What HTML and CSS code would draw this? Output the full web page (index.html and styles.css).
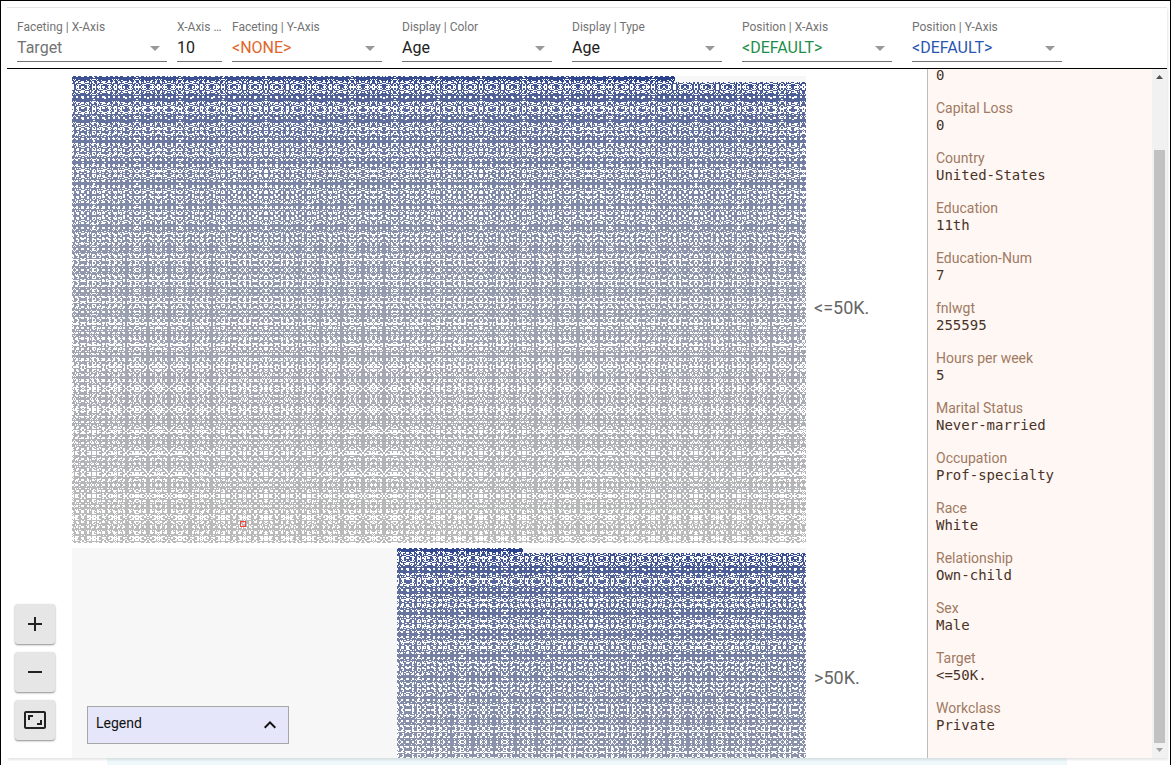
FILE: index.html
```html
<!DOCTYPE html>
<html lang="en">
<head>
<meta charset="utf-8">
<title>Facets Dive</title>
<link rel="stylesheet" href="styles.css">
</head>
<body>
<div class="frame">
  <main class="dive">
    <header class="controls">
      <div class="group">
        <div class="field muted"><label for="fx">Faceting | X-Axis</label><select id="fx"><option>Target</option></select></div>
        <div class="field count"><label for="fn">X-Axis Buckets</label><input id="fn" type="text" value="10"></div>
        <div class="field orange"><label for="fy">Faceting | Y-Axis</label><select id="fy"><option>&lt;NONE&gt;</option></select></div>
      </div>
      <div class="field"><label for="dc">Display | Color</label><select id="dc"><option>Age</option></select></div>
      <div class="field"><label for="dt">Display | Type</label><select id="dt"><option>Age</option></select></div>
      <div class="field green"><label for="px">Position | X-Axis</label><select id="px"><option>&lt;DEFAULT&gt;</option></select></div>
      <div class="field blue"><label for="py">Position | Y-Axis</label><select id="py"><option>&lt;DEFAULT&gt;</option></select></div>
    </header>
    <div class="content">
      <section class="stage">
        <div class="facets">
          <div class="facet">
            <canvas class="dots" data-count="12435" data-cols="140" data-end="1"></canvas>
            <span class="marker"></span>
          </div>
          <div class="facet-label">&lt;=50K.</div>
          <div class="facet">
            <canvas class="dots" data-count="3846" data-cols="78" data-end="0.75"></canvas>
          </div>
          <div class="facet-label">&gt;50K.</div>
        </div>
        <div class="zoom">
          <button aria-label="Zoom in"><svg viewBox="0 0 24 24"><path d="M19 13h-6v6h-2v-6H5v-2h6V5h2v6h6z"/></svg></button>
          <button aria-label="Zoom out"><svg viewBox="0 0 24 24"><path d="M19 13H5v-2h14z"/></svg></button>
          <button aria-label="Fit to window"><svg viewBox="0 0 24 24"><path d="M19 12h-2v3h-3v2h5v-5zM7 9h3V7H5v5h2V9zm14-6H3c-1.1 0-2 .9-2 2v14c0 1.100.9 2 2 2h18c1.100 0 2-.9 2-2V5c0-1.100-.9-2-2-2zm0 16H3V5h18v14z"/></svg></button>
        </div>
        <button class="legend">Legend<svg viewBox="0 0 24 24"><path d="M12 8l-6 6 1.410 1.410L12 10.830l4.590 4.580L18 14z"/></svg></button>
      </section>
      <aside class="details">
        <dl class="record">
          <div><dt>Capital Gain</dt><dd>0</dd></div>
          <div><dt>Capital Loss</dt><dd>0</dd></div>
          <div><dt>Country</dt><dd>United-States</dd></div>
          <div><dt>Education</dt><dd>11th</dd></div>
          <div><dt>Education-Num</dt><dd>7</dd></div>
          <div><dt>fnlwgt</dt><dd>255595</dd></div>
          <div><dt>Hours per week</dt><dd>5</dd></div>
          <div><dt>Marital Status</dt><dd>Never-married</dd></div>
          <div><dt>Occupation</dt><dd>Prof-specialty</dd></div>
          <div><dt>Race</dt><dd>White</dd></div>
          <div><dt>Relationship</dt><dd>Own-child</dd></div>
          <div><dt>Sex</dt><dd>Male</dd></div>
          <div><dt>Target</dt><dd>&lt;=50K.</dd></div>
          <div><dt>Workclass</dt><dd>Private</dd></div>
        </dl>
        <div class="scrollbar">
          <svg class="up" viewBox="0 0 15 15"><path d="M4 10L7.500 6L11 10z"/></svg>
          <div class="thumb"></div>
          <svg class="down" viewBox="0 0 15 15"><path d="M4 5L7.500 9L11 5z"/></svg>
        </div>
      </aside>
    </div>
  </main>
  <div class="below"></div>
</div>
<script src="dots.js"></script>
</body>
</html>
```

FILE: styles.css
```css
* { box-sizing: border-box; }
body { margin: 0; font-family: Roboto, sans-serif; color: #212121; background: #fff; }
.frame { height: 100vh; border: 1px solid #000; border-bottom: 0; padding: 6px 3px 0 6px; display: flex; flex-direction: column; overflow: hidden; }
.dive { flex: 1; min-height: 0; display: flex; flex-direction: column; border-top: 1px solid #e6e6e6; box-shadow: 1px 2px 2px rgba(0, 0, 0, .1); position: relative; background: #fff; }
.below { height: 7px; margin: 0 100px; background: #eef8fa; }
.controls { display: flex; gap: 20px; padding: 12px 10px 6px; border-bottom: 1px solid #000; }
.group { display: flex; gap: 10px; }
.field { position: relative; width: 150px; display: flex; flex-direction: column; color: #212121; }
.field label { font-size: 12px; line-height: 14px; color: #737373; white-space: nowrap; overflow: hidden; text-overflow: ellipsis; }
.field select, .field input { appearance: none; width: 100%; height: 28px; margin: 0; padding: 0 0 1px; border: 0; border-bottom: 1px solid #737373; border-radius: 0; background: transparent; font: 16px Roboto, sans-serif; color: inherit; outline: 0; }
.field:not(.count)::after { content: ""; position: absolute; right: 7px; bottom: 11px; border: 5px solid transparent; border-top-color: #999; border-bottom: 0; }
.count { width: 45px; }
.muted { color: #737373; }
.orange { color: #e0662a; }
.green { color: #1e8e4a; }
.blue { color: #2a56b0; }
.content { flex: 1; min-height: 0; display: flex; }
.stage { flex: 1; min-width: 0; position: relative; overflow: hidden; }
.facets { display: grid; grid-template-columns: 1fr 121px; row-gap: 5px; padding: 7px 0 0 65px; }
.facet { position: relative; background: #f7f7f7; display: flex; justify-content: flex-end; align-items: flex-start; }
.dots { display: block; }
.facet-label { align-self: center; padding: 0 0 3px 8px; font-size: 18px; line-height: 22px; color: #666; }
.marker { position: absolute; left: 23%; top: 95%; width: 6px; height: 6px; margin: 1px 0 0 -1px; border: 1px solid #f44336; }
.zoom { position: absolute; left: 8px; bottom: 18px; display: flex; flex-direction: column; gap: 8px; }
.zoom button { width: 40px; height: 40px; padding: 8px; border: 0; border-radius: 3px; background: #e6e6e6; box-shadow: 0 1px 2px rgba(0, 0, 0, .45); }
.zoom svg { display: block; width: 24px; height: 24px; fill: #212121; }
.legend { position: absolute; left: 80px; bottom: 14px; width: 202px; height: 38px; padding: 0 6px 4px 8px; display: flex; align-items: center; justify-content: space-between; border: 1px solid #a6a6a6; background: #e6e6fa; font: 14px Roboto, sans-serif; color: #111; }
.legend svg { width: 24px; height: 24px; margin-bottom: -4px; fill: #111; }
.details { width: 240px; display: flex; border-left: 1px solid #bdbdbd; background: #fff7f4; overflow: hidden; }
.record { flex: 1; margin: 0; padding: 0 8px 8px; display: flex; flex-direction: column; justify-content: flex-end; }
.record div { height: 50px; flex: none; }
.record dt { font-size: 14px; line-height: 17px; color: #a07a62; }
.record dd { margin: 0; font: 14px/17px "DejaVu Sans Mono", monospace; color: #4a3226; }
.scrollbar { width: 15px; display: flex; flex-direction: column; align-items: center; background: #f1f1f1; }
.scrollbar svg { width: 15px; height: 15px; flex: none; }
.up { fill: #505050; }
.down { fill: #a3a3a3; }
.thumb { width: 11px; margin-top: 66px; flex: 1; background: #c1c1c1; }
```

FILE: dots.js
```js
const COLS = 140;
const START = [36, 60, 138];
const END = [186, 186, 186];
const BEAT = 21.5;

function hash(a, b) {
  const n = Math.sin(a * 12.9898 + b * 78.233) * 43758.5453;
  return n - Math.floor(n);
}

function lit(x, y, u, v) {
  const fx = Math.abs(((x / BEAT) % 1) - 0.5) * 2;
  const fy = Math.abs((((y + BEAT / 2) / BEAT) % 1) - 0.5) * 2;
  const du = Math.min(u, 1 - u), dv = Math.min(v, 1 - v);
  if (du < 0.2 && dv < 0.2) return false;
  const broken = 1 - (1 - 0.6 * fx * fx) * (1 - 0.75 * fy * fy);
  const n = hash(Math.floor(fx * 11), Math.floor(fy * 11 + y / BEAT / 6));
  return n > broken * 0.52;
}

function draw(canvas) {
  const count = +canvas.dataset.count, cols = +canvas.dataset.cols, end = +canvas.dataset.end;
  const facet = canvas.parentElement.clientWidth;
  const cell = facet / COLS;
  const rows = Math.ceil(count / cols);
  const w = canvas.width = Math.round(cell * cols);
  const h = canvas.height = Math.round(cell * rows);
  const ctx = canvas.getContext("2d");
  const img = ctx.createImageData(w, h);
  for (let y = 0; y < h; y++) {
    for (let x = 0; x < w; x++) {
      const cx = (x + 0.5) / cell, cy = (h - y - 0.5) / cell;
      const col = Math.floor(cx), row = Math.floor(cy);
      const index = row * cols + col;
      if (index >= count) continue;
      const on = lit(x, y, cx - col, cy - row);
      const t = end * Math.min(1, Math.pow((1 - index / count) * 1.05, 0.38));
      const i = (y * w + x) * 4;
      for (let k = 0; k < 3; k++) {
        img.data[i + k] = on ? START[k] + (END[k] - START[k]) * t : 255;
      }
      img.data[i + 3] = 255;
    }
  }
  ctx.putImageData(img, 0, 0);
}

function drawAll() {
  document.querySelectorAll(".dots").forEach(draw);
}

drawAll();
window.addEventListener("resize", drawAll);
```
